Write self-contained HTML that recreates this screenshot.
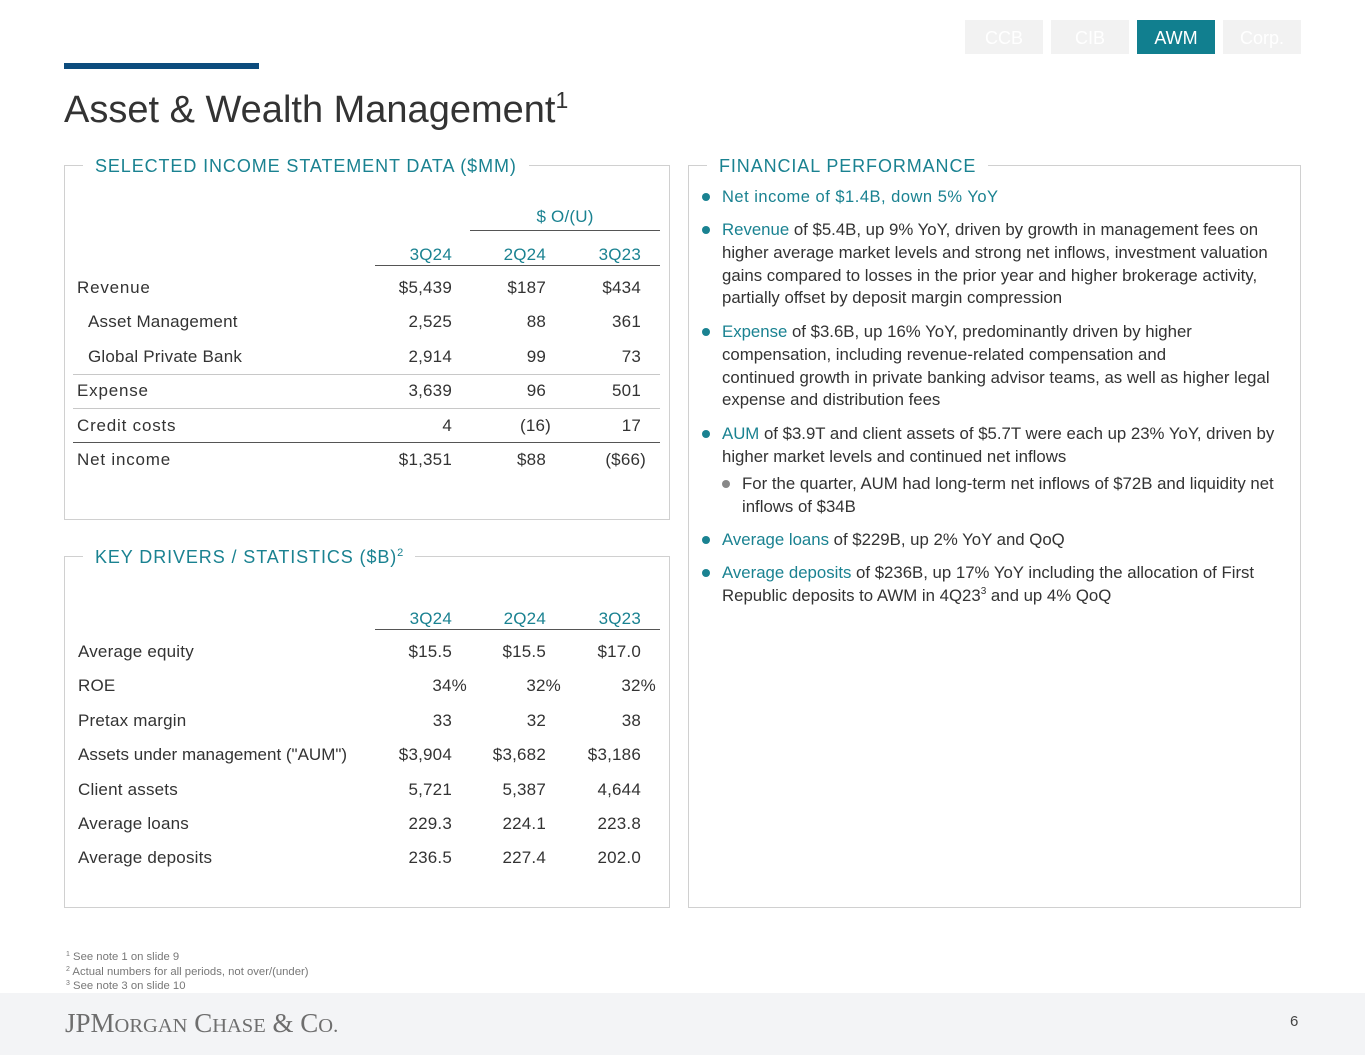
<!DOCTYPE html>
<html><head><meta charset="utf-8"><style>
body{margin:0;width:1365px;height:1055px;position:relative;background:#fff;font-family:"Liberation Sans",sans-serif;color:#333;overflow:hidden}
.a{position:absolute;white-space:nowrap}
.t{color:#1a8291}
.r{position:absolute;line-height:20px;font-size:17px;white-space:nowrap;letter-spacing:.2px}
.n{position:absolute;line-height:20px;font-size:17px;text-align:right;white-space:nowrap;letter-spacing:.2px}
.box{position:absolute;border:1.5px solid #d0d0d0}
.lg{position:absolute;background:#fff;padding:0 12px;font-size:18px;color:#1a8291;line-height:22px;letter-spacing:.9px}
.hl{position:absolute;height:1px;background:#c8c8c8}
.hd{position:absolute;height:1.5px;background:#555}
.tab{position:absolute;top:20px;width:78px;height:34px;background:#f2f2f2;color:#fff;font-size:18px;text-align:center;line-height:36px}
.bul{position:absolute;left:722px;font-size:16.8px;line-height:22.8px;width:575px}
.bul:before{content:"";position:absolute;left:-20px;top:7px;width:8px;height:8px;border-radius:50%;background:#1a8291}
.bul.g:before{background:#888}
sup.s{font-size:10px;vertical-align:0;position:relative;top:-7px;line-height:0}
</style></head><body>
<div class="tab" style="left:965px">CCB</div>
<div class="tab" style="left:1051px">CIB</div>
<div class="tab" style="left:1137px;background:#117f8f">AWM</div>
<div class="tab" style="left:1223px">Corp.</div>
<div class="a" style="left:64px;top:63px;width:195px;height:6px;background:#0c4c7d"></div>
<div class="a" style="left:64px;top:87px;font-size:38px;color:#333;line-height:46px">Asset &amp; Wealth Management<sup style="font-size:23px;position:relative;top:-14px;vertical-align:0;line-height:0">1</sup></div>

<div class="box" style="left:64px;top:165px;width:604px;height:353px"></div>
<div class="lg" style="left:83px;top:155px">SELECTED INCOME STATEMENT DATA ($MM)</div>
<div class="box" style="left:64px;top:556px;width:604px;height:350px"></div>
<div class="lg" style="left:83px;top:546px">KEY DRIVERS / STATISTICS ($B)<sup class="s" style="font-size:11px;letter-spacing:0">2</sup></div>
<div class="box" style="left:688px;top:165px;width:611px;height:741px"></div>
<div class="lg" style="left:707px;top:155px">FINANCIAL PERFORMANCE</div>

<div class="n t" style="left:470px;width:190px;text-align:center;top:207px">$ O/(U)</div>
<div class="hd" style="left:470px;top:230px;width:190px;height:1px"></div>
<div class="n t" style="left:352px;width:100px;top:245px">3Q24</div>
<div class="n t" style="left:446px;width:100px;top:245px">2Q24</div>
<div class="n t" style="left:541px;width:100px;top:245px">3Q23</div>
<div class="hd" style="left:375px;top:265px;width:285px;height:1px"></div>

<div class="r" style="left:77px;top:278px;letter-spacing:.8px">Revenue</div>
<div class="n" style="left:352px;width:100px;top:278px">$5,439</div><div class="n" style="left:446px;width:100px;top:278px">$187</div><div class="n" style="left:541px;width:100px;top:278px">$434</div>
<div class="r" style="left:88px;top:312px">Asset Management</div>
<div class="n" style="left:352px;width:100px;top:312px">2,525</div><div class="n" style="left:446px;width:100px;top:312px">88</div><div class="n" style="left:541px;width:100px;top:312px">361</div>
<div class="r" style="left:88px;top:347px">Global Private Bank</div>
<div class="n" style="left:352px;width:100px;top:347px">2,914</div><div class="n" style="left:446px;width:100px;top:347px">99</div><div class="n" style="left:541px;width:100px;top:347px">73</div>
<div class="hl" style="left:73px;top:374px;width:587px"></div>
<div class="r" style="left:77px;top:381px;letter-spacing:.8px">Expense</div>
<div class="n" style="left:352px;width:100px;top:381px">3,639</div><div class="n" style="left:446px;width:100px;top:381px">96</div><div class="n" style="left:541px;width:100px;top:381px">501</div>
<div class="hl" style="left:73px;top:408px;width:587px"></div>
<div class="r" style="left:77px;top:416px;letter-spacing:.8px">Credit costs</div>
<div class="n" style="left:352px;width:100px;top:416px">4</div><div class="n" style="left:451px;width:100px;top:416px">(16)</div><div class="n" style="left:541px;width:100px;top:416px">17</div>
<div class="hd" style="left:73px;top:442px;width:587px;height:1px"></div>
<div class="r" style="left:77px;top:450px;letter-spacing:.8px">Net income</div>
<div class="n" style="left:352px;width:100px;top:450px">$1,351</div><div class="n" style="left:446px;width:100px;top:450px">$88</div><div class="n" style="left:546px;width:100px;top:450px">($66)</div>

<div class="n t" style="left:352px;width:100px;top:609px">3Q24</div>
<div class="n t" style="left:446px;width:100px;top:609px">2Q24</div>
<div class="n t" style="left:541px;width:100px;top:609px">3Q23</div>
<div class="hd" style="left:375px;top:629px;width:285px;height:1px"></div>
<div class="r" style="left:78px;top:642px">Average equity</div>
<div class="n" style="left:352px;width:100px;top:642px">$15.5</div><div class="n" style="left:446px;width:100px;top:642px">$15.5</div><div class="n" style="left:541px;width:100px;top:642px">$17.0</div>
<div class="r" style="left:78px;top:676px">ROE</div>
<div class="n" style="left:367px;width:100px;top:676px">34%</div><div class="n" style="left:461px;width:100px;top:676px">32%</div><div class="n" style="left:556px;width:100px;top:676px">32%</div>
<div class="r" style="left:78px;top:711px">Pretax margin</div>
<div class="n" style="left:352px;width:100px;top:711px">33</div><div class="n" style="left:446px;width:100px;top:711px">32</div><div class="n" style="left:541px;width:100px;top:711px">38</div>
<div class="r" style="left:78px;top:745px;letter-spacing:0">Assets under management ("AUM")</div>
<div class="n" style="left:352px;width:100px;top:745px">$3,904</div><div class="n" style="left:446px;width:100px;top:745px">$3,682</div><div class="n" style="left:541px;width:100px;top:745px">$3,186</div>
<div class="r" style="left:78px;top:780px">Client assets</div>
<div class="n" style="left:352px;width:100px;top:780px">5,721</div><div class="n" style="left:446px;width:100px;top:780px">5,387</div><div class="n" style="left:541px;width:100px;top:780px">4,644</div>
<div class="r" style="left:78px;top:814px">Average loans</div>
<div class="n" style="left:352px;width:100px;top:814px">229.3</div><div class="n" style="left:446px;width:100px;top:814px">224.1</div><div class="n" style="left:541px;width:100px;top:814px">223.8</div>
<div class="r" style="left:78px;top:848px">Average deposits</div>
<div class="n" style="left:352px;width:100px;top:848px">236.5</div><div class="n" style="left:446px;width:100px;top:848px">227.4</div><div class="n" style="left:541px;width:100px;top:848px">202.0</div>

<div class="bul t" style="top:186px;letter-spacing:.5px;font-size:16.5px">Net income of $1.4B, down 5% YoY</div>
<div class="bul" style="top:219px"><span class="t">Revenue</span> of $5.4B, up 9% YoY, driven by growth in management fees on<br>higher average market levels and strong net inflows, investment valuation<br>gains compared to losses in the prior year and higher brokerage activity,<br>partially offset by deposit margin compression</div>
<div class="bul" style="top:321px"><span class="t">Expense</span> of $3.6B, up 16% YoY, predominantly driven by higher<br>compensation, including revenue-related compensation and<br>continued growth in private banking advisor teams, as well as higher legal<br>expense and distribution fees</div>
<div class="bul" style="top:423px"><span class="t">AUM</span> of $3.9T and client assets of $5.7T were each up 23% YoY, driven by<br>higher market levels and continued net inflows</div>
<div class="bul g" style="top:473px;left:742px;width:555px">For the quarter, AUM had long-term net inflows of $72B and liquidity net<br>inflows of $34B</div>
<div class="bul" style="top:529px"><span class="t">Average loans</span> of $229B, up 2% YoY and QoQ</div>
<div class="bul" style="top:562px"><span class="t">Average deposits</span> of $236B, up 17% YoY including the allocation of First<br>Republic deposits to AWM in 4Q23<sup class="s">3</sup> and up 4% QoQ</div>

<div class="a" style="left:66px;top:950px;font-size:11.3px;color:#777;line-height:14.5px"><sup class="s" style="font-size:7px;top:-4px">1</sup> See note 1 on slide 9<br><sup class="s" style="font-size:7px;top:-4px">2</sup> Actual numbers for all periods, not over/(under)<br><sup class="s" style="font-size:7px;top:-4px">3</sup> See note 3 on slide 10</div>
<div class="a" style="left:0;top:993px;width:1365px;height:62px;background:#f3f4f6"></div>
<div class="a" style="left:65px;top:1008px;font-family:'Liberation Serif',serif;font-size:27px;color:#6e6e6e;line-height:30px">JPM<span style="font-size:20.5px">ORGAN</span> C<span style="font-size:20.5px">HASE</span> &amp; C<span style="font-size:20.5px">O.</span></div>
<div class="a" style="left:1290px;top:1013px;font-size:15px;color:#444">6</div>
</body></html>
